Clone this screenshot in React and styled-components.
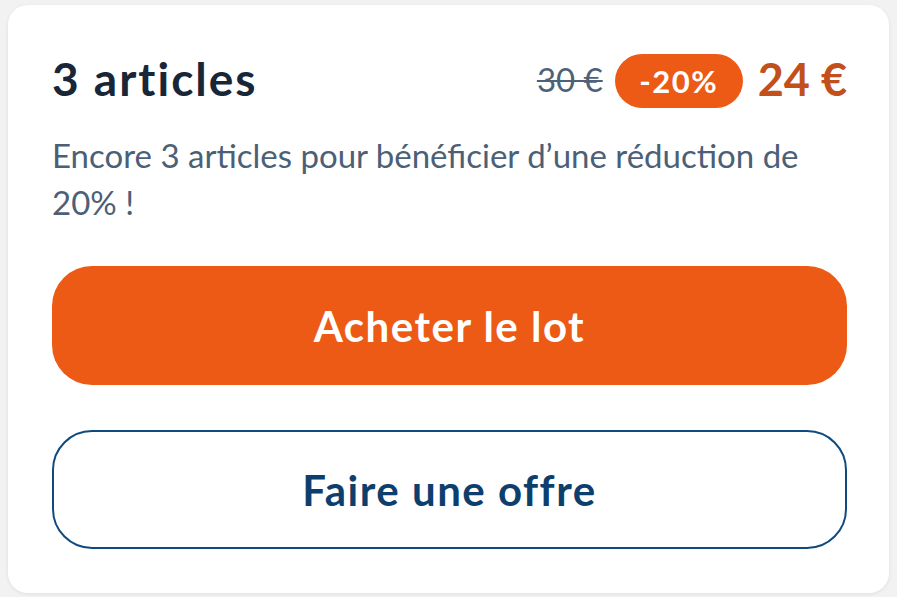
import styled, { createGlobalStyle } from "styled-components";

const GlobalStyle = createGlobalStyle`
    html, body {
        margin: 0;
        padding: 0;
        background: #f2f2f2;
    }

    body {
        font-family: 'Lato', 'Noto Sans', sans-serif;
    }

    * {
        box-sizing: border-box;
    }
`

export default function App () {

    const bundle = {
        count: 3,
        oldPrice: "30 €",
        discount: "-20%",
        newPrice: "24 €",
    };

    return (
        <>
            <GlobalStyle />
            <Page>
                <Card>
                    <Header>
                        <Title>{bundle.count} articles</Title>
                        <Prices>
                            <OldPrice>{bundle.oldPrice}</OldPrice>
                            <Badge>{bundle.discount}</Badge>
                            <NewPrice>{bundle.newPrice}</NewPrice>
                        </Prices>
                    </Header>
                    <Description>
                        Encore 3 articles pour bénéficier d’une réduction de 20% !
                    </Description>
                    <Actions>
                        <Button variant="primary">Acheter le lot</Button>
                        <Button variant="outline">Faire une offre</Button>
                    </Actions>
                </Card>
            </Page>
        </>
    );
}

const Page = styled.div`
    width: 897px;
    height: 597px;
    padding: 5px 8px 4px 8px;
`

const Card = styled.div`
    display: flex;
    flex-direction: column;
    height: 100%;
    padding: 46px 42px 44px 44px;
    background: #ffffff;
    border-radius: 20px;
    box-shadow: 0 1px 4px rgba(0, 0, 0, 0.08);
`

const Header = styled.div`
    display: flex;
    justify-content: space-between;
    align-items: center;
    height: 55px;
`

const Title = styled.h1`
    margin: 0;
    font-size: 46px;
    font-weight: 700;
    letter-spacing: 2px;
    color: #182638;
`

const Prices = styled.div`
    display: flex;
    align-items: center;
`

const OldPrice = styled.span`
    font-size: 33px;
    color: #4d6278;
    text-decoration: line-through;
    text-decoration-thickness: 2px;
`

const Badge = styled.span`
    display: flex;
    align-items: center;
    justify-content: center;
    width: 128px;
    height: 54px;
    margin: 5px 15px 0 12px;
    border-radius: 27px;
    background: #ec5a16;
    color: #ffffff;
    font-size: 31px;
    font-weight: 700;
    letter-spacing: 1.5px;
`

const NewPrice = styled.span`
    font-size: 45px;
    font-weight: 700;
    color: #c2501b;
`

const Description = styled.p`
    margin: 26px 0 0 0;
    max-width: 770px;
    font-size: 33px;
    line-height: 47px;
    color: #4b6077;
`

const Actions = styled.div`
    display: flex;
    flex-direction: column;
    gap: 45px;
    margin-top: auto;
`

const Button = styled.button`
    display: flex;
    align-items: center;
    justify-content: center;
    width: 100%;
    height: 119px;
    border-radius: 40px;
    font-family: inherit;
    font-size: 42px;
    font-weight: 700;
    letter-spacing: 1.5px;
    cursor: pointer;
    background: ${(props) => (props.variant === "primary" ? "#ec5a16" : "#ffffff")};
    color: ${(props) => (props.variant === "primary" ? "#ffffff" : "#0d3f6e")};
    border: ${(props) => (props.variant === "primary" ? "none" : "2.5px solid #0f4a7e")};
`
